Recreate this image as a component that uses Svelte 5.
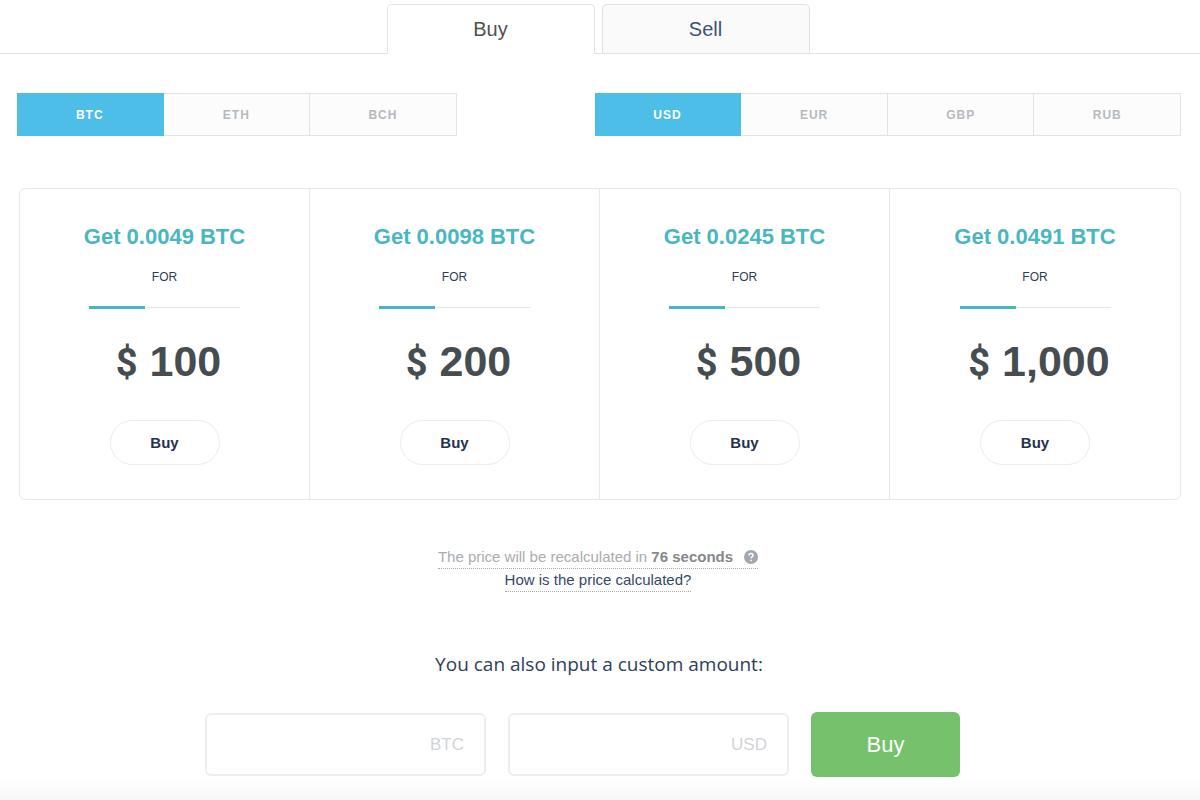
<script lang="ts">
  const tabs = ['Buy', 'Sell'];
  const coins = ['BTC', 'ETH', 'BCH'];
  const currencies = ['USD', 'EUR', 'GBP', 'RUB'];

  const offers = [
    { amount: '0.0049', price: '100' },
    { amount: '0.0098', price: '200' },
    { amount: '0.0245', price: '500' },
    { amount: '0.0491', price: '1,000' },
  ];

  let tab = $state('Buy');
  let coin = $state('BTC');
  let currency = $state('USD');
  let seconds = $state(76);
  let coinAmount = $state('');
  let cashAmount = $state('');
</script>

<main class="exchange">
  <nav class="tabs">
    {#each tabs as name}
      <button class="tab" class:active={tab === name} onclick={() => (tab = name)}>{name}</button>
    {/each}
  </nav>

  <div class="pickers">
    <div class="picker coins">
      {#each coins as name}
        <button class="option" class:active={coin === name} onclick={() => (coin = name)}>{name}</button>
      {/each}
    </div>
    <div class="picker currencies">
      {#each currencies as name}
        <button class="option" class:active={currency === name} onclick={() => (currency = name)}>{name}</button>
      {/each}
    </div>
  </div>

  <section class="offers">
    {#each offers as offer}
      <article class="offer">
        <h2 class="get">Get {offer.amount} {coin}</h2>
        <p class="for">FOR</p>
        <div class="rule"></div>
        <p class="price"><span class="sign">$</span><span>{offer.price}</span></p>
        <button class="offer-buy">Buy</button>
      </article>
    {/each}
  </section>

  <div class="notice">
    <p class="countdown">
      <span>The price will be recalculated in <strong>{seconds} seconds</strong></span>
      <svg class="help" viewBox="0 0 14 14" aria-hidden="true">
        <circle cx="7" cy="7" r="7" fill="#a3a8b0" />
        <path d="M5 5.6C5 4.3 5.8 3.6 7 3.6s2 .7 2 1.8c0 1.4-2 1.5-2 2.9" fill="none" stroke="#fff" stroke-width="1.5" />
        <circle cx="7" cy="10.3" r=".9" fill="#fff" />
      </svg>
    </p>
    <a class="how" href="#how">How is the price calculated?</a>
  </div>

  <h3 class="custom-title">You can also input a custom amount:</h3>

  <form class="custom" onsubmit={(e) => e.preventDefault()}>
    <label class="field">
      <input type="text" bind:value={coinAmount} />
      <span>{coin}</span>
    </label>
    <label class="field">
      <input type="text" bind:value={cashAmount} />
      <span>{currency}</span>
    </label>
    <button class="submit">Buy</button>
  </form>

  <div class="fade"></div>
</main>

<style>
  :global(body) {
    background: #fff;
    font-family: 'Liberation Sans', Arial, sans-serif;
    color: #2d3e5a;
  }

  h2,
  h3,
  p {
    margin: 0;
  }

  button {
    font-family: inherit;
    cursor: pointer;
  }

  .exchange {
    display: flex;
    flex-direction: column;
    box-sizing: border-box;
    min-height: 100vh;
    padding-top: 4px;
  }

  .tabs {
    display: flex;
    justify-content: center;
    gap: 7px;
    padding-right: 4px;
    border-bottom: 1px solid #e2e2e2;
  }

  .tab {
    width: 208px;
    height: 50px;
    margin-bottom: -1px;
    padding: 0;
    border: 1px solid #e2e2e2;
    border-radius: 5px 5px 0 0;
    background: #fafafa;
    color: #3c5375;
    font-size: 20px;
  }

  .tab.active {
    border-bottom-color: #fff;
    background: #fff;
    color: #50504e;
  }

  .pickers {
    display: flex;
    gap: 138px;
    padding: 39px 19px 0 17px;
  }

  .picker {
    display: flex;
  }

  .coins {
    flex: 3;
  }

  .currencies {
    flex: 4;
  }

  .option {
    flex: 1;
    height: 43px;
    padding: 0;
    border: 1px solid #e0e4e5;
    border-left-width: 0;
    background: #fcfcfc;
    color: #b6babf;
    font-size: 12px;
    font-weight: 700;
    letter-spacing: 1px;
  }

  .option.active {
    border-color: #4dbee8;
    background: #4dbee8;
    color: #fff;
  }

  .offers {
    display: grid;
    grid-template-columns: repeat(4, 1fr);
    margin: 52px 19px 0;
    border: 1px solid #e8e8e8;
    border-radius: 6px;
  }

  .offer {
    display: flex;
    flex-direction: column;
    align-items: center;
    padding: 35px 0 34px;
    border-right: 1px solid #e8e8e8;
  }

  .offer:last-child {
    border-right: 0;
  }

  .get {
    color: #48b7bf;
    font-size: 22px;
    line-height: 26px;
  }

  .for {
    margin-top: 19px;
    font-size: 12px;
    line-height: 16px;
  }

  .rule {
    width: 151px;
    height: 3px;
    margin-top: 21px;
    background:
      linear-gradient(#45b8bf, #45b8bf) left / 56px 3px no-repeat,
      linear-gradient(#e4e7e8, #e4e7e8) center / 100% 1px no-repeat;
  }

  .price {
    display: flex;
    align-items: baseline;
    gap: 12px;
    margin-top: 27px;
    padding-left: 8px;
    color: #464d50;
    font-size: 43px;
    font-weight: 700;
    line-height: 50px;
  }

  .sign {
    font-family: Roboto, sans-serif;
    font-size: 38px;
    line-height: 40px;
  }

  .offer-buy {
    width: 110px;
    height: 45px;
    margin-top: 34px;
    padding: 0;
    border: 1px solid #ececee;
    border-radius: 23px;
    background: #fff;
    color: #24304e;
    font-size: 15px;
    font-weight: 700;
  }

  .notice {
    display: flex;
    flex-direction: column;
    align-items: center;
    margin-top: 46px;
    padding-right: 4px;
    font-size: 15px;
    line-height: 22px;
  }

  .countdown {
    display: flex;
    align-items: center;
    gap: 11px;
    border-bottom: 1px dotted #a9a9a9;
    color: #a9acb0;
  }

  .countdown strong {
    color: #85878b;
  }

  .help {
    width: 14px;
    height: 14px;
  }

  .how {
    border-bottom: 1px dotted #a9a9a9;
    color: #34496b;
    text-decoration: none;
  }

  .custom-title {
    margin-top: 58px;
    padding-right: 2px;
    font-family: 'Open Sans', sans-serif;
    font-size: 19px;
    font-weight: 500;
    line-height: 28px;
    text-align: center;
  }

  .custom {
    display: flex;
    align-items: center;
    justify-content: center;
    gap: 22px;
    margin-top: 34px;
    padding-right: 35px;
  }

  .field {
    display: flex;
    align-items: center;
    box-sizing: border-box;
    width: 281px;
    height: 63px;
    padding: 0 20px;
    border: 2px solid #eee;
    border-radius: 6px;
    color: #d2d3d6;
    font-size: 17px;
  }

  .field input {
    flex: 1;
    min-width: 0;
    height: 100%;
    padding: 0;
    border: 0;
    outline: 0;
    background: none;
    color: #2d3e5a;
    font: inherit;
  }

  .submit {
    width: 149px;
    height: 65px;
    padding: 0;
    border: 0;
    border-radius: 6px;
    background: #76c26c;
    color: #fff;
    font-size: 22px;
  }

  .fade {
    flex: 1;
    min-height: 23px;
    background: linear-gradient(#fff, #f8f8f8);
  }
</style>
